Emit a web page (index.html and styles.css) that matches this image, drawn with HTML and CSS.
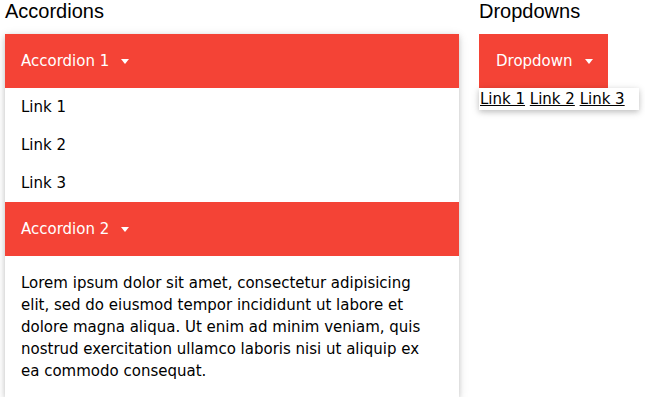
FILE: index.html
```html
<!DOCTYPE html>
<html lang="en">
<head>
<meta charset="utf-8">
<title>Accordions and Dropdowns</title>
<link rel="stylesheet" href="styles.css">
</head>
<body>
<div class="page">
  <section class="col col-left">
    <h3 class="title">Accordions</h3>
    <div class="card">
      <button class="btn btn-acc">Accordion 1 <span class="caret"></span></button>
      <div class="acc-links">
        <a class="acc-link" href="#">Link 1</a>
        <a class="acc-link" href="#">Link 2</a>
        <a class="acc-link" href="#">Link 3</a>
      </div>
      <button class="btn btn-acc">Accordion 2 <span class="caret"></span></button>
      <div class="acc-body">
        <p>Lorem ipsum dolor sit amet, consectetur adipisicing elit, sed do eiusmod tempor incididunt ut labore et dolore magna aliqua. Ut enim ad minim veniam, quis nostrud exercitation ullamco laboris nisi ut aliquip ex ea commodo consequat.</p>
      </div>
    </div>
  </section>
  <section class="col col-right">
    <h3 class="title">Dropdowns</h3>
    <div class="dropdown">
      <button class="btn btn-drop">Dropdown <span class="caret"></span></button>
      <div class="drop-content">
        <a href="#">Link 1</a>
        <a href="#">Link 2</a>
        <a href="#">Link 3</a>
      </div>
    </div>
  </section>
</div>
</body>
</html>
```

FILE: styles.css
```css
html, body {
  margin: 0;
  padding: 0;
  background: #fff;
  color: #000;
  font-family: "DejaVu Sans", Verdana, sans-serif;
  font-size: 15px;
  line-height: 22px;
}

.page {
  display: flex;
  gap: 20px;
  padding: 0 5px;
}

.col-left {
  width: 454px;
}

.col-right {
  flex: 1;
}

.title {
  margin: 0 0 12px 0;
  font-family: "Liberation Sans", Arial, sans-serif;
  font-weight: normal;
  font-size: 20px;
  line-height: 22px;
}

.card {
  box-shadow: 0 2px 5px 0 rgba(0,0,0,0.16), 0 2px 10px 0 rgba(0,0,0,0.12);
  background: #fff;
}

.btn {
  display: flex;
  align-items: center;
  border: none;
  margin: 0;
  background: #f44336;
  color: #fff;
  font-family: inherit;
  font-size: 15px;
  line-height: 22px;
  padding: 16px;
  text-align: left;
  cursor: pointer;
}

.btn-acc {
  width: 100%;
}

.btn-drop {
  width: 129px;
  padding-left: 17px;
}

.caret {
  display: inline-block;
  width: 0;
  height: 0;
  margin-left: 12px;
  margin-top: 1px;
  border-left: 4.5px solid transparent;
  border-right: 4.5px solid transparent;
  border-top: 5px solid #fff;
}

.acc-links {
  display: flex;
  flex-direction: column;
}

.acc-link {
  display: block;
  padding: 8px 16px;
  color: #000;
  text-decoration: none;
}

.acc-body {
  padding: 1px 16px;
}

.acc-body p {
  margin: 15px 0 14px 0;
  max-width: 410px;
}

.dropdown {
  position: relative;
}

.drop-content {
  position: absolute;
  top: 54px;
  left: 0;
  width: 159px;
  padding-left: 1px;
  background: #fff;
  box-shadow: 0 2px 5px 0 rgba(0,0,0,0.16), 0 2px 10px 0 rgba(0,0,0,0.12);
  z-index: 2;
}

.drop-content a {
  color: #000;
  text-decoration: underline;
}
```
